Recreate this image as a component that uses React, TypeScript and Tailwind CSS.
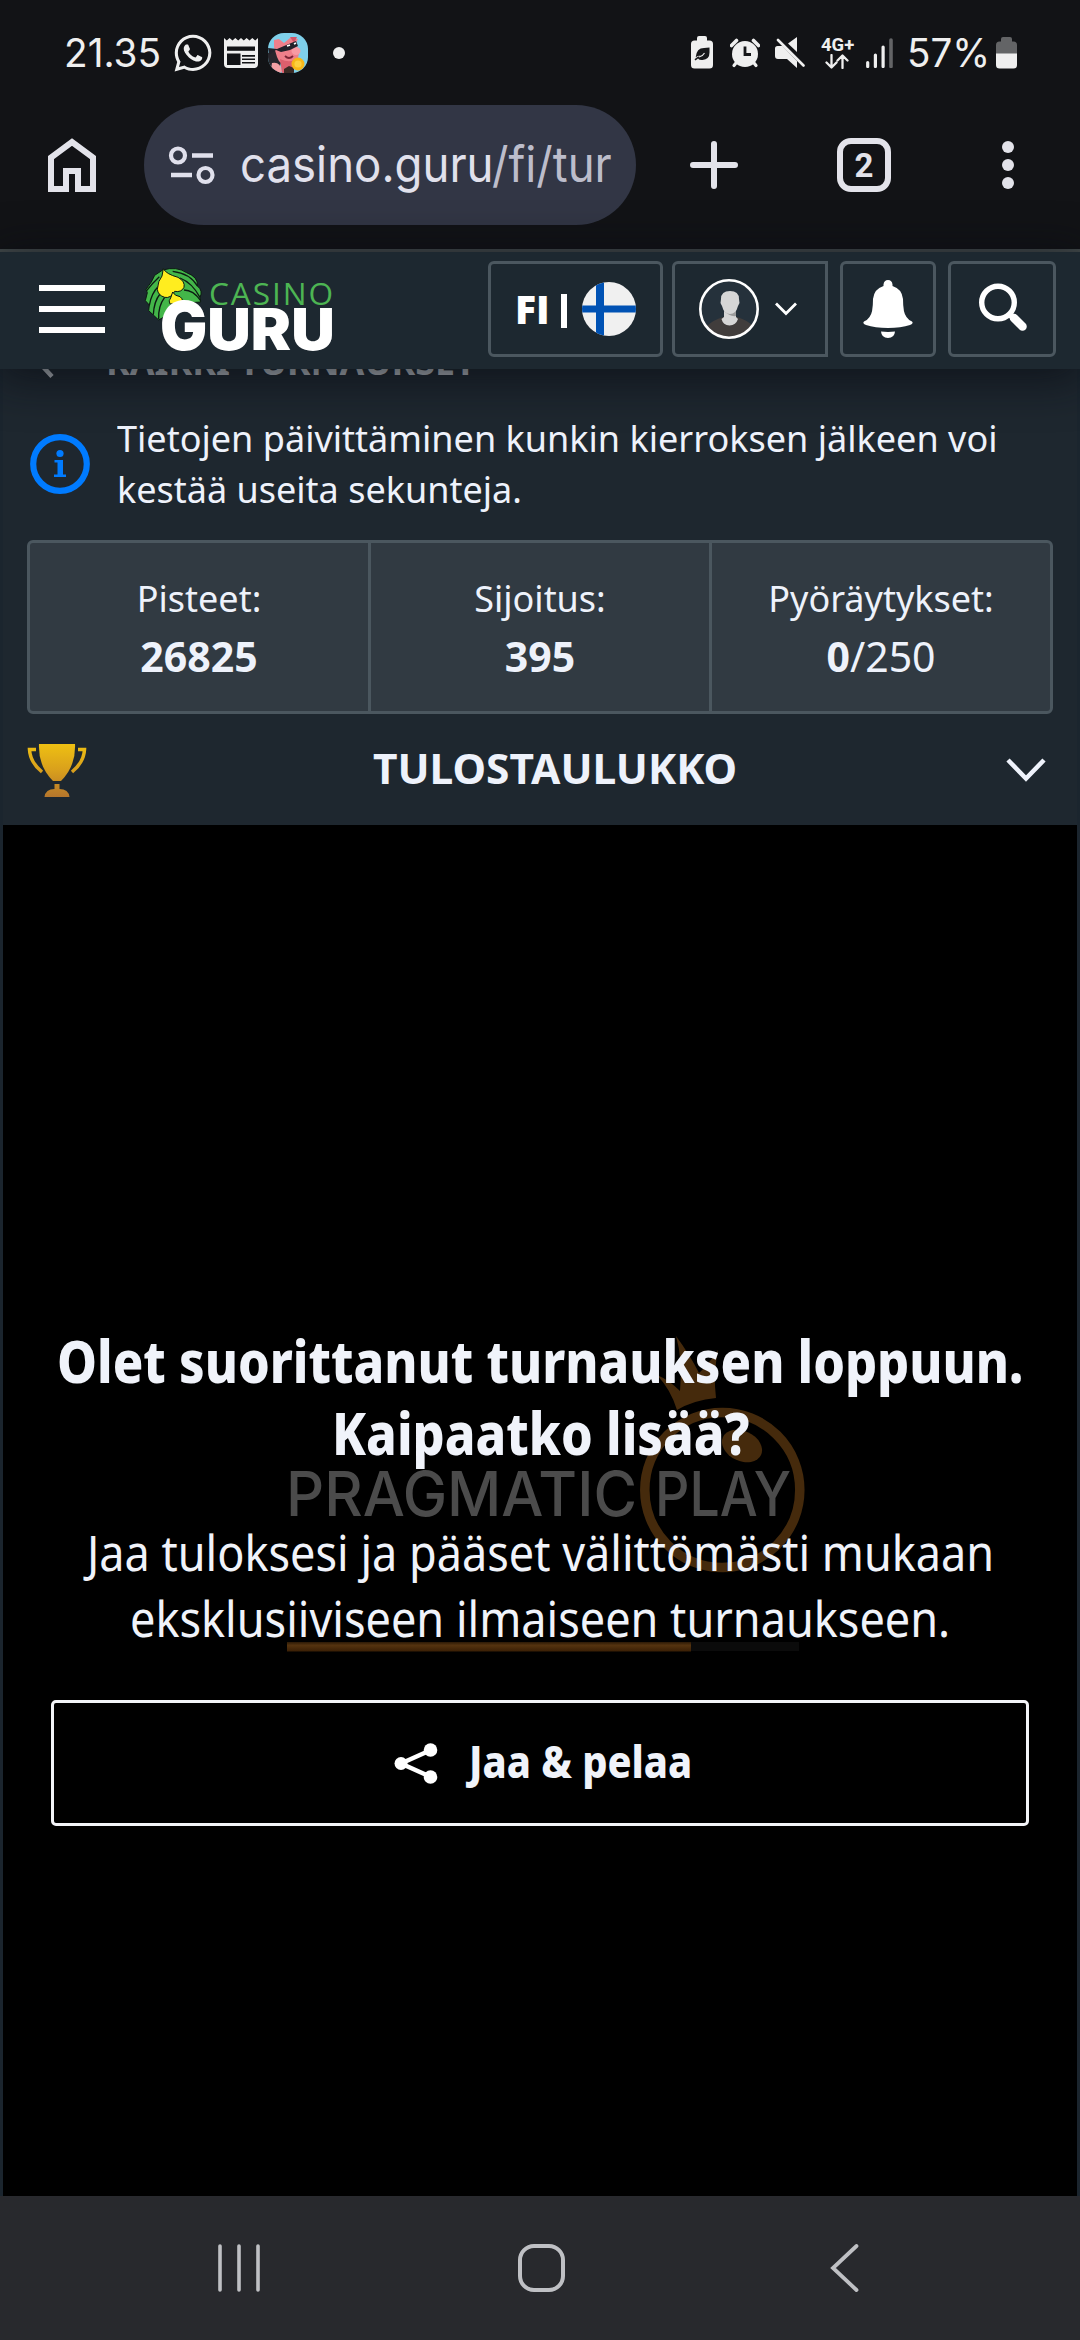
import { useLayoutEffect, useRef, useState } from 'react';
import type { ReactNode } from 'react';
import { FaWhatsapp } from 'react-icons/fa';

/** Single line of text condensed or stretched horizontally to a given width. */
function Fit({ width, className = '', children }: { width: number; className?: string; children: ReactNode }) {
  const ref = useRef<HTMLSpanElement>(null);
  const [scale, setScale] = useState(1);
  useLayoutEffect(() => {
    if (ref.current) setScale(width / ref.current.offsetWidth);
  }, [width]);
  return (
    <span className={`block shrink-0 whitespace-nowrap ${className}`} style={{ width }}>
      <span ref={ref} className="inline-block origin-left" style={{ transform: `scaleX(${scale})` }}>
        {children}
      </span>
    </span>
  );
}

function NewsIcon() {
  return (
    <svg width="34" height="30" viewBox="0 0 34 30" className="ml-3 shrink-0">
      <path d="M0 0l2.8 2.5L5.6 0l2.9 2.5L11.3 0l2.9 2.5L17 0l2.8 2.5L22.6 0l2.9 2.5L28.3 0l2.9 2.5L34 0v26q0 4-4 4H4q-4 0-4-4z" fill="#efefef" />
      <path d="M3 8.5h28v5H3zM3 15.5h13.5V27H3zM18 17h13v1.8H18zM18 20.5h13v1.6H18zM18 24h13v1.6H18z" fill="#121316" />
      <path d="M3 13.5h28" stroke="#efefef" strokeWidth="1.4" />
    </svg>
  );
}

function PigIcon() {
  return (
    <svg width="40" height="40" viewBox="0 0 40 40" className="ml-[10px] shrink-0">
      <defs>
        <clipPath id="pig">
          <rect width="40" height="40" rx="16" />
        </clipPath>
      </defs>
      <g clipPath="url(#pig)">
        <rect width="40" height="40" fill="#7fd0ea" />
        <path d="M0 20l8-3 6 9-4 14H0z" fill="#27262c" />
        <path d="M6 7l5-1 5 4 6-5 8 1-2 4 3 10q-1 10-9 12-10 1-13-8L6 14z" fill="#ee7f8a" />
        <path d="M22 4l7 0-3 6z" fill="#d35467" />
        <ellipse cx="28" cy="18" rx="4.5" ry="4" fill="#f79aa3" />
        <path d="M0 15l9 1 7-3 12-5 2 5-8 4-9 2-5-2-7 5z" fill="#22222a" />
        <path d="M19 13l3-1M26 11l2-1" stroke="#fff" strokeWidth="1.8" />
        <path d="M17 23q4 4 8 0" stroke="#7b2535" strokeWidth="1.8" fill="none" />
        <path d="M4 30q8-2 10 8l-3 4H2z" fill="#f4a0a4" />
        <path d="M12 26q9 4 14 1l-2 13H14z" fill="#dc5f6d" />
        <path d="M16 36l5-3 5 2v6H16z" fill="#3b2a24" />
        <circle cx="30" cy="31" r="6.5" fill="#f7b718" />
        <circle cx="30" cy="31" r="3.6" fill="#fcd040" />
      </g>
    </svg>
  );
}

function StatusBar() {
  return (
    <div className="flex h-[105px] items-center text-[#efefef]">
      <Fit width={97} className="ml-[64px] font-[Inter] text-[40px] leading-[50px]">21.35</Fit>
      <FaWhatsapp className="ml-[11px] size-[42px] shrink-0" />
      <div className="-ml-0.5" />
      <NewsIcon />
      <PigIcon />
      <div className="ml-[25px] size-3 shrink-0 rounded-full bg-[#efefef]" />

      <svg width="22" height="33" viewBox="0 0 22 33" className="ml-[346px] shrink-0">
        <path d="M6 4.5V2q0-2 2-2h6q2 0 2 2v2.500h2.500q3.500 0 3.500 3.500v21q0 3.500-3.500 3.500h-15Q0 32.500 0 29V8q0-3.500 3.500-3.500z" fill="#efefef" />
        <path d="M18.500 11.500v5q0 7-7 7.500-3 .300-4.500-1.500l-2.500 2-1-1.200q2-2.300 6-3.700-3 .200-4.800 1.700Q5.500 12 13 12z" fill="#16171a" />
        <path d="M8 21q4-1 5.500-4" stroke="#efefef" strokeWidth="1.100" fill="none" />
      </svg>
      <svg width="30" height="30" viewBox="0 0 30 30" className="ml-[17px] shrink-0">
        <path d="M1.500 7.500l5-5M28.500 7.500l-5-5" stroke="#efefef" strokeWidth="3.600" strokeLinecap="round" />
        <path d="M6 25l-2 2.500M24 25l2 2.500" stroke="#efefef" strokeWidth="3.200" strokeLinecap="round" />
        <circle cx="15" cy="16" r="13" fill="#efefef" />
        <path d="M15 8.500V16.500h6" stroke="#16171a" strokeWidth="2.800" fill="none" />
      </svg>
      <svg width="30" height="31" viewBox="0 0 30 31" className="ml-[15px] shrink-0">
        <path d="M22 0v15l-9-8.500zM2.500 9h5L22 24v7l-10-9H3Q0 22 0 19v-7.500Q0 9 2.500 9z" fill="#efefef" />
        <path d="M3 3l25.500 25.500" stroke="#efefef" strokeWidth="2.600" strokeLinecap="round" />
      </svg>
      <div className="ml-4 flex w-8 shrink-0 flex-col items-center">
        <Fit width={33} className="font-[Roboto] text-[19px] leading-[17px] font-bold">4G+</Fit>
        <svg width="24" height="15" viewBox="0 0 24 15" className="mt-px">
          <path d="M6.500 1v12M1.500 8.500l5 5 5-5M17.500 14V2M12.500 6.500l5-5 5 5" stroke="#efefef" strokeWidth="2.300" fill="none" strokeLinecap="round" strokeLinejoin="round" />
        </svg>
      </div>
      <svg width="27" height="30" viewBox="0 0 27 30" className="ml-[13px] shrink-0">
        <path d="M1.700 24.500v4M9.400 17v11.500M17.100 9v19.500" stroke="#efefef" strokeWidth="3.200" strokeLinecap="round" />
        <path d="M25 2v26.500" stroke="#636466" strokeWidth="3.600" strokeLinecap="round" />
      </svg>
      <Fit width={83} className="ml-[14px] font-[Inter] text-[40px] leading-[50px]">57%</Fit>
      <svg width="21" height="32" viewBox="0 0 21 32" className="ml-[6px] shrink-0">
        <path d="M5 4.500V2q0-2 2-2h7q2 0 2 2v2.500h1.500Q21 4.500 21 8v9H0V8q0-3.500 3.500-3.500z" fill="#636466" />
        <path d="M0 16.500h21V28q0 3.500-3.500 3.500h-14Q0 31.500 0 28z" fill="#efefef" />
      </svg>
    </div>
  );
}

function BrowserBar() {
  return (
    <div className="flex h-36 items-start">
      <div className="flex h-[120px] w-full items-center">
        <svg width="50" height="54" viewBox="0 0 50 54" className="ml-[47px] shrink-0" fill="none">
          <path d="M4 51V19.500L25 4l21 15.500V51H31V33H19v18z" stroke="#e3e3ea" strokeWidth="6" />
        </svg>
        <div className="ml-[47px] flex h-[120px] w-[492px] shrink-0 items-center rounded-full bg-[#323645]">
          <svg width="48" height="40" viewBox="0 0 48 40" className="ml-6 shrink-0" fill="none" stroke="#e0e0ec">
            <circle cx="10" cy="10.500" r="7" strokeWidth="4.200" />
            <path d="M24 10.500h21M3 30h21" strokeWidth="4.400" />
            <circle cx="37.500" cy="30" r="7" strokeWidth="4.200" />
          </svg>
          <Fit width={372} className="ml-[24px] font-[Inter] text-[49px] leading-[60px] text-[#e1e1ec]">
            casino.guru<span className="text-[#bcbdcb]">/fi/tur</span>
          </Fit>
        </div>
        <svg width="48" height="48" viewBox="0 0 48 48" className="ml-[54px] shrink-0">
          <path d="M24 3v42M3 24h42" stroke="#e3e3ea" strokeWidth="6" strokeLinecap="round" />
        </svg>
        <div className="ml-[99px] flex size-[54px] shrink-0 items-center justify-center rounded-[14px] border-[6px] border-[#e3e3ea] font-[Roboto] text-[33px] leading-none font-bold text-[#e3e3ea]">
          2
        </div>
        <div className="ml-[111px] flex shrink-0 flex-col gap-1.5">
          <div className="size-3 rounded-full bg-[#e3e3ea]" />
          <div className="size-3 rounded-full bg-[#e3e3ea]" />
          <div className="size-3 rounded-full bg-[#e3e3ea]" />
        </div>
      </div>
    </div>
  );
}

function Logo() {
  return (
    <svg width="200" height="100" viewBox="0 0 600 300" className="ml-[35px] shrink-0 overflow-visible">
      <path
        d="M68 30Q110 18 140 38 176 52 172 78 190 92 180 112L182 126 120 130 70 172 56 180 40 165 26 152 28 135 16 122 22 98 18 88 34 66 44 46z"
        fill="#43b649"
        stroke="#0c1a12"
        strokeWidth="3"
        strokeLinejoin="round"
      />
      <path
        d="M98 34Q150 40 172 78M120 54Q156 68 180 112M132 90Q160 90 182 122M58 50Q36 70 20 92M56 78Q34 100 28 136M60 102Q42 124 40 164M74 112Q54 138 56 178"
        fill="none"
        stroke="#0c1a12"
        strokeWidth="4"
      />
      <path d="M70 26Q78 42 114 52 136 64 132 82 124 98 104 94 92 116 74 112 54 106 52 88 54 62 66 48z" fill="#ffed1f" stroke="#0c1a12" strokeWidth="3" />
      <path d="M98 96Q104 108 120 110 134 122 122 130L90 132Q84 122 92 114z" fill="#ffed1f" stroke="#0c1a12" strokeWidth="3" />
      <text x="207" y="134" textLength="372" lengthAdjust="spacing" fontFamily="Open Sans" fontWeight="400" fontSize="95" fill="#4db553">
        CASINO
      </text>
      <text x="60" y="270" textLength="142" lengthAdjust="spacingAndGlyphs" fontFamily="Inter" fontWeight="900" fontSize="203" fill="#fff">
        G
      </text>
      <text x="202" y="269" textLength="382" lengthAdjust="spacingAndGlyphs" fontFamily="Inter" fontWeight="900" fontSize="172" fill="#fff">
        URU
      </text>
    </svg>
  );
}

function SiteHeader() {
  return (
    <header className="relative z-10 flex h-[117px] items-start bg-[#1d2830] shadow-[0_6px_45px_4px_rgba(8,12,18,0.7)]">
      <div className="mt-[33px] ml-[39px] flex w-[66px] shrink-0 flex-col gap-[15px]">
        <div className="h-1.5 bg-white" />
        <div className="h-1.5 bg-white" />
        <div className="h-1.5 bg-white" />
      </div>
      <div className="mt-2">
        <Logo />
      </div>
      <div className="mt-[9px] mr-6 ml-auto flex h-24 gap-3">
        <div className="-mr-[3px] flex w-[175px] items-center rounded-md border-[3px] border-[#4b575f]">
          <Fit width={35} className="ml-[24px] font-['Open_Sans'] text-[38px] leading-[48px] font-extrabold text-white">FI</Fit>
          <div className="mt-1 ml-[11px] h-[34px] w-1.5 bg-white" />
          <svg width="54" height="54" viewBox="0 0 54 54" className="ml-[15px] shrink-0">
            <defs>
              <clipPath id="flag">
                <circle cx="27" cy="27" r="27" />
              </clipPath>
            </defs>
            <g clipPath="url(#flag)">
              <path d="M0 0h54v54H0z" fill="#f0f0f0" />
              <path d="M14 0h8v54h-8zM0 23.500h54v7H0z" fill="#0052b4" />
            </g>
          </svg>
        </div>
        <div className="flex w-[156px] items-center rounded-l-md border-[3px] border-[#4b575f]">
          <svg width="60" height="60" viewBox="0 0 60 60" className="ml-6 shrink-0">
            <defs>
              <clipPath id="avatar">
                <circle cx="30" cy="30" r="28" />
              </clipPath>
            </defs>
            <g clipPath="url(#avatar)">
              <path d="M0 0h60v60H0z" fill="#25313b" />
              <path d="M8 60V47q6-6 16-9h14q10 3 16 9v13z" fill="#413d3c" />
              <path d="M25 32h12v6l2 2q-2 6-8.500 6.500Q24 46 22.500 40l2.500-2z" fill="#d6d6d6" />
              <path d="M25 32h12v5q-6 1-12-5z" fill="#9b9b9b" />
              <path d="M22 20q0-8 9-8t9 8l.500 4-1.500 3q-2 8-8 8t-8-8l-1.500-3z" fill="#d6d6d6" />
            </g>
            <circle cx="30" cy="30" r="28.700" fill="none" stroke="#fff" strokeWidth="2.600" />
          </svg>
          <svg width="22" height="14" viewBox="0 0 22 14" className="ml-4 shrink-0">
            <path d="M1 1.500l10 10 10-10" fill="none" stroke="#fff" strokeWidth="2.800" />
          </svg>
        </div>
        <div className="flex w-24 items-center justify-center rounded-md border-[3px] border-[#4b575f]">
          <svg width="50" height="58" viewBox="0 0 50 58" fill="#fff">
            <path d="M20.500 6V4.500Q21 0 25 0t4.500 4.500V6Q39 9 40 19q0 14 3.500 18 2 3 5.500 4.500 2 2-2 3.500-9 3-22 3T3 45q-4-1.500-2-3.500 3.500-1.500 5.500-4.500Q10 33 10 19 11 9 20.500 6z" />
            <path d="M18 51.500q7 .800 14 0-.500 6.500-7 6.500t-7-6.500z" />
          </svg>
        </div>
        <div className="flex w-[108px] items-center justify-center rounded-md border-[3px] border-[#4b575f]">
          <svg width="50" height="50" viewBox="0 0 50 50" fill="none" stroke="#fff" className="-mt-1 ml-px">
            <circle cx="20" cy="20.500" r="16.300" strokeWidth="5.400" />
            <path d="M32 32.500l4 4" strokeWidth="6" />
            <path d="M36 36l8.500 8.500" strokeWidth="8.500" strokeLinecap="round" />
          </svg>
        </div>
      </div>
    </header>
  );
}

function Stat({ label, children }: { label: string; children: ReactNode }) {
  return (
    <div className="flex-1 border-r-[3px] border-[#4b575f] pt-[29px] text-center last:border-r-0">
      <div className="text-[36px] leading-[54px]">{label}</div>
      <div className="text-[41px] leading-[60px]">{children}</div>
    </div>
  );
}

function Tournament() {
  return (
    <section className="mx-[3px] h-[456px] bg-[#1e272f] font-['Noto_Sans'] text-[#eef2fb]">
      <div className="flex h-3 items-start overflow-hidden">
        <svg width="20" height="30" viewBox="0 0 20 30" className="-mt-5 ml-[34px] shrink-0">
          <path d="M15 2L3 14.500 15 27.500" stroke="#b4b9be" strokeWidth="4.500" fill="none" />
        </svg>
        <Fit width={370} className="-mt-[25px] ml-[49px] text-[36px] leading-9 font-bold text-[#b4b9be]">KAIKKI TURNAUKSET</Fit>
      </div>
      <div className="mt-[32px] flex">
        <svg width="60" height="60" viewBox="0 0 60 60" className="mt-[21px] ml-[27px] shrink-0" fill="#007bff">
          <circle cx="30" cy="30" r="26.800" fill="none" stroke="#007bff" strokeWidth="6.200" />
          <circle cx="30" cy="19.500" r="3.600" />
          <path d="M24.500 26h8.500v14.500h3V43H24v-2.500h3.500V28.500h-3z" />
        </svg>
        <div className="ml-[27px] text-[36px] leading-[51px]">
          <Fit width={880}>Tietojen päivittäminen kunkin kierroksen jälkeen voi</Fit>
          <Fit width={405}>kestää useita sekunteja.</Fit>
        </div>
      </div>
      <div className="mt-[25px] mr-6 ml-6 flex h-[174px] rounded-md border-[3px] border-[#4b575f] bg-[#313a42]">
        <Stat label="Pisteet:">
          <b>26825</b>
        </Stat>
        <Stat label="Sijoitus:">
          <b>395</b>
        </Stat>
        <Stat label="Pyöräytykset:">
          <b>0</b>/250
        </Stat>
      </div>
      <div className="flex h-[111px] items-center">
        <svg width="60" height="54" viewBox="0 0 60 54" className="ml-6 shrink-0">
          <defs>
            <linearGradient id="gold" x1="0" y1="0" x2="0" y2="54" gradientUnits="userSpaceOnUse">
              <stop offset="0" stopColor="#efc112" />
              <stop offset=".5" stopColor="#d9a01c" />
              <stop offset="1" stopColor="#b5762c" />
            </linearGradient>
          </defs>
          <path d="M12 1h36q1 22-14 37h-8Q11 23 12 1z" fill="url(#gold)" />
          <path d="M27.500 41h5v5q9 0 10 8h-25q1-8 10-8z" fill="url(#gold)" />
          <path d="M9 6.500H2.500Q3 19 15 29M51 6.500h6.500Q57 19 45 29" fill="none" stroke="url(#gold)" strokeWidth="3.500" />
        </svg>
        <Fit width={364} className="-mt-1 ml-[286px] text-[42px] leading-[60px] font-bold">TULOSTAULUKKO</Fit>
        <svg width="40" height="24" viewBox="0 0 40 24" className="ml-[269px] shrink-0">
          <path d="M2 2l18 18.500L38 2" fill="none" stroke="#eef2fb" strokeWidth="4.500" />
        </svg>
      </div>
    </section>
  );
}

function ProviderMark() {
  return (
    <svg width="530" height="340" viewBox="280 1330 530 340" className="absolute top-[505px] left-[277px]">
      <defs>
        <linearGradient id="bar" x1="0" y1="0" x2="0" y2="1">
          <stop offset="0" stopColor="#2c1a06" />
          <stop offset=".35" stopColor="#54330f" />
          <stop offset="1" stopColor="#3a1f05" />
        </linearGradient>
      </defs>
      <circle cx="722.300" cy="1490" r="77.500" fill="none" stroke="#452a0c" strokeWidth="9.500" />
      <path d="M676 1336Q690 1355 699 1373 708 1365 718 1350 713 1375 716 1398 694 1400 677 1410 671 1390 657 1375 669 1380 680 1391 683 1360 676 1336z" fill="#452a0c" />
      <ellipse cx="742" cy="1446" rx="21" ry="15" transform="rotate(25 742 1446)" fill="#452a0c" />
      <text x="286" y="1516" textLength="351" lengthAdjust="spacingAndGlyphs" fontFamily="Inter" fontWeight="500" fontSize="62" fill="#4b4b4b">
        PRAGMATIC
      </text>
      <text x="655" y="1516" textLength="136" lengthAdjust="spacingAndGlyphs" fontFamily="Inter" fontWeight="500" fontSize="62" fill="#4b4b4b">
        PLAY
      </text>
      <rect x="287" y="1642" width="512" height="9" fill="#0b0b0b" />
      <rect x="287" y="1642" width="404" height="9.500" fill="url(#bar)" />
    </svg>
  );
}

function GameArea() {
  return (
    <main className="relative mx-[3px] h-[1371px] overflow-hidden bg-black font-['Noto_Sans'] text-[#f0f3fa]">
      <ProviderMark />
      <div className="relative flex flex-col items-center">
        <h1 className="mt-[500px] flex flex-col items-center text-[58px] leading-[72px] font-extrabold">
          <Fit width={966}>Olet suorittanut turnauksen loppuun.</Fit>
          <Fit width={417}>Kaipaatko lisää?</Fit>
        </h1>
        <p className="mt-[50px] flex flex-col items-center text-[50px] leading-[66px]">
          <Fit width={907}>Jaa tuloksesi ja pääset välittömästi mukaan</Fit>
          <Fit width={820}>eksklusiiviseen ilmaiseen turnaukseen.</Fit>
        </p>
        <button className="mt-[49px] flex h-[126px] w-[978px] items-center rounded-[5px] border-[3px] border-[#f3f4f8]">
          <svg width="44" height="41" viewBox="0 0 44 41" className="ml-[340px] shrink-0" fill="#fff">
            <path d="M37 7L7 20.500 37 34" fill="none" stroke="#fff" strokeWidth="4.500" />
            <circle cx="7" cy="20.500" r="6.500" />
            <circle cx="36.500" cy="7" r="6.800" />
            <circle cx="36.500" cy="34" r="6.800" />
          </svg>
          <Fit width={223} className="-mt-1 ml-[31px] text-left text-[45px] leading-[60px] font-extrabold">Jaa &amp; pelaa</Fit>
        </button>
      </div>
    </main>
  );
}

function NavBar() {
  return (
    <nav className="flex h-36 items-center bg-[#28292d]">
      <svg width="42" height="48" viewBox="0 0 42 48" className="ml-[218px] shrink-0">
        <path d="M2 2v44M21 2v44M40 2v44" stroke="#bfc0c4" strokeWidth="3.600" strokeLinecap="round" />
      </svg>
      <div className="ml-[258px] h-12 w-[47px] shrink-0 rounded-[16px] border-[4px] border-[#bfc0c4]" />
      <svg width="29" height="48" viewBox="0 0 29 48" className="ml-[265px] shrink-0">
        <path d="M26.500 2L3 24l23.500 22" fill="none" stroke="#bfc0c4" strokeWidth="3.800" strokeLinecap="round" />
      </svg>
    </nav>
  );
}

export default function App() {
  return (
    <div className="h-[2340px] w-[1080px] overflow-hidden bg-[#121316]">
      <StatusBar />
      <BrowserBar />
      <div className="h-[3px] bg-[#454c4d]" />
      <div className="bg-[#1b252e]">
        <SiteHeader />
        <Tournament />
        <GameArea />
      </div>
      <NavBar />
    </div>
  );
}
